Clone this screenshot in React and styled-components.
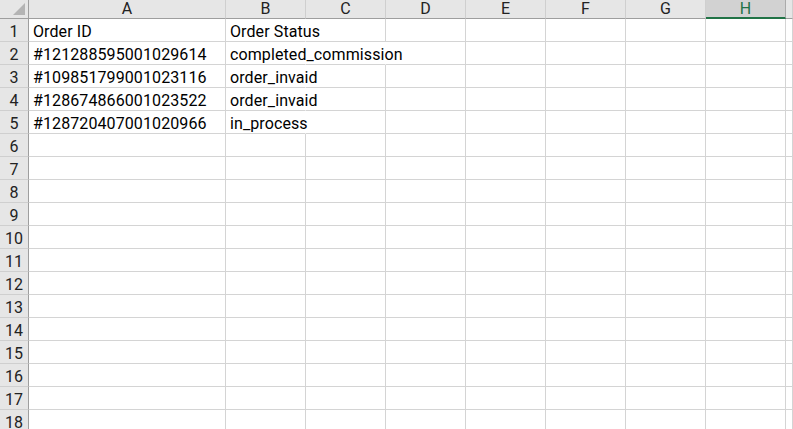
import React from "react";
import styled, { createGlobalStyle } from "styled-components";

const Global = createGlobalStyle`
  html, body { margin: 0; padding: 0; background: #ffffff; overflow: hidden; }
  #root { width: 793px; height: 429px; overflow: hidden; }
`;

const Sheet = styled.div`
  display: grid;
  grid-template-columns: 29px 197px repeat(7, 80px) 1fr;
  grid-template-rows: 19px;
  grid-auto-rows: 23px;
  width: 793px;
  height: 429px;
  overflow: hidden;
  font-family: Roboto, "Noto Sans CJK SC", sans-serif;
  font-size: 16px;
  letter-spacing: 0.1px;
  background: #fff;
`;

const Corner = styled.div`
  position: relative;
  background: #e6e6e6;
  border-right: 1px solid #9e9e9e;
  border-bottom: 1px solid #9e9e9e;
  box-sizing: border-box;
  &::after {
    content: "";
    position: absolute;
    right: 3px;
    bottom: 3px;
    width: 0;
    height: 0;
    border-left: 12px solid transparent;
    border-bottom: 12px solid #b4b4b4;
  }
`;

const ColHead = styled.div`
  box-sizing: border-box;
  display: flex;
  align-items: center;
  justify-content: center;
  background: ${(p) => (p.$active ? "#d2d2d2" : "#e6e6e6")};
  color: ${(p) => (p.$active ? "#217346" : "#222")};
  border-right: 1px solid ${(p) => (p.$active ? "#ababab" : "#cfcfcf")};
  border-bottom: ${(p) => (p.$active ? "2px solid #217346" : "1px solid #9e9e9e")};
  line-height: 1;
  padding-top: ${(p) => (p.$active ? "1px" : "0")};
`;

const RowHead = styled.div`
  box-sizing: border-box;
  display: flex;
  align-items: center;
  justify-content: center;
  padding-top: 3px;
  background: #e6e6e6;
  color: #222;
  border-right: 1px solid #9e9e9e;
  border-bottom: 1px solid #cfcfcf;
  line-height: 1;
`;

const Cell = styled.div`
  box-sizing: border-box;
  display: flex;
  align-items: center;
  padding: 3px 0 0 4px;
  white-space: nowrap;
  overflow: ${(p) => (p.$spill ? "visible" : "hidden")};
  color: #000;
  border-right: 1px solid ${(p) => (p.$covered ? "transparent" : "#d4d4d4")};
  border-bottom: 1px solid #d4d4d4;
  position: ${(p) => (p.$spill ? "relative" : "static")};
  z-index: ${(p) => (p.$spill ? 1 : 0)};
  line-height: 1;
`;

const cols = ["A", "B", "C", "D", "E", "F", "G", "H", ""];
const data = [
  ["Order ID", "Order Status"],
  ["#121288595001029614", "completed_commission"],
  ["#109851799001023116", "order_invaid"],
  ["#128674866001023522", "order_invaid"],
  ["#128720407001020966", "in_process"],
];
// how many columns to the right of B the text of each row runs over
const spillSpan = [1, 2, 1, 1, 1];

export default function App() {
  const rows = Array.from({ length: 18 }, (_, i) => i);
  return (
    <>
      <Global />
      <Sheet>
        <Corner />
        {cols.map((c, i) => (
          <ColHead key={"h" + i} $active={c === "H"}>
            {c}
          </ColHead>
        ))}
        {rows.map((r) => (
          <React.Fragment key={r}>
            <RowHead>{r + 1}</RowHead>
            {cols.map((c, ci) => {
              const v = data[r] ? data[r][ci] : undefined;
              const span = spillSpan[r] || 0;
              const spill = ci === 1 && span > 0;
              const covered = span > 0 && ci >= 1 && ci < 1 + span;
              return (
                <Cell key={ci} $spill={spill} $covered={covered}>
                  {v || ""}
                </Cell>
              );
            })}
          </React.Fragment>
        ))}
      </Sheet>
    </>
  );
}
